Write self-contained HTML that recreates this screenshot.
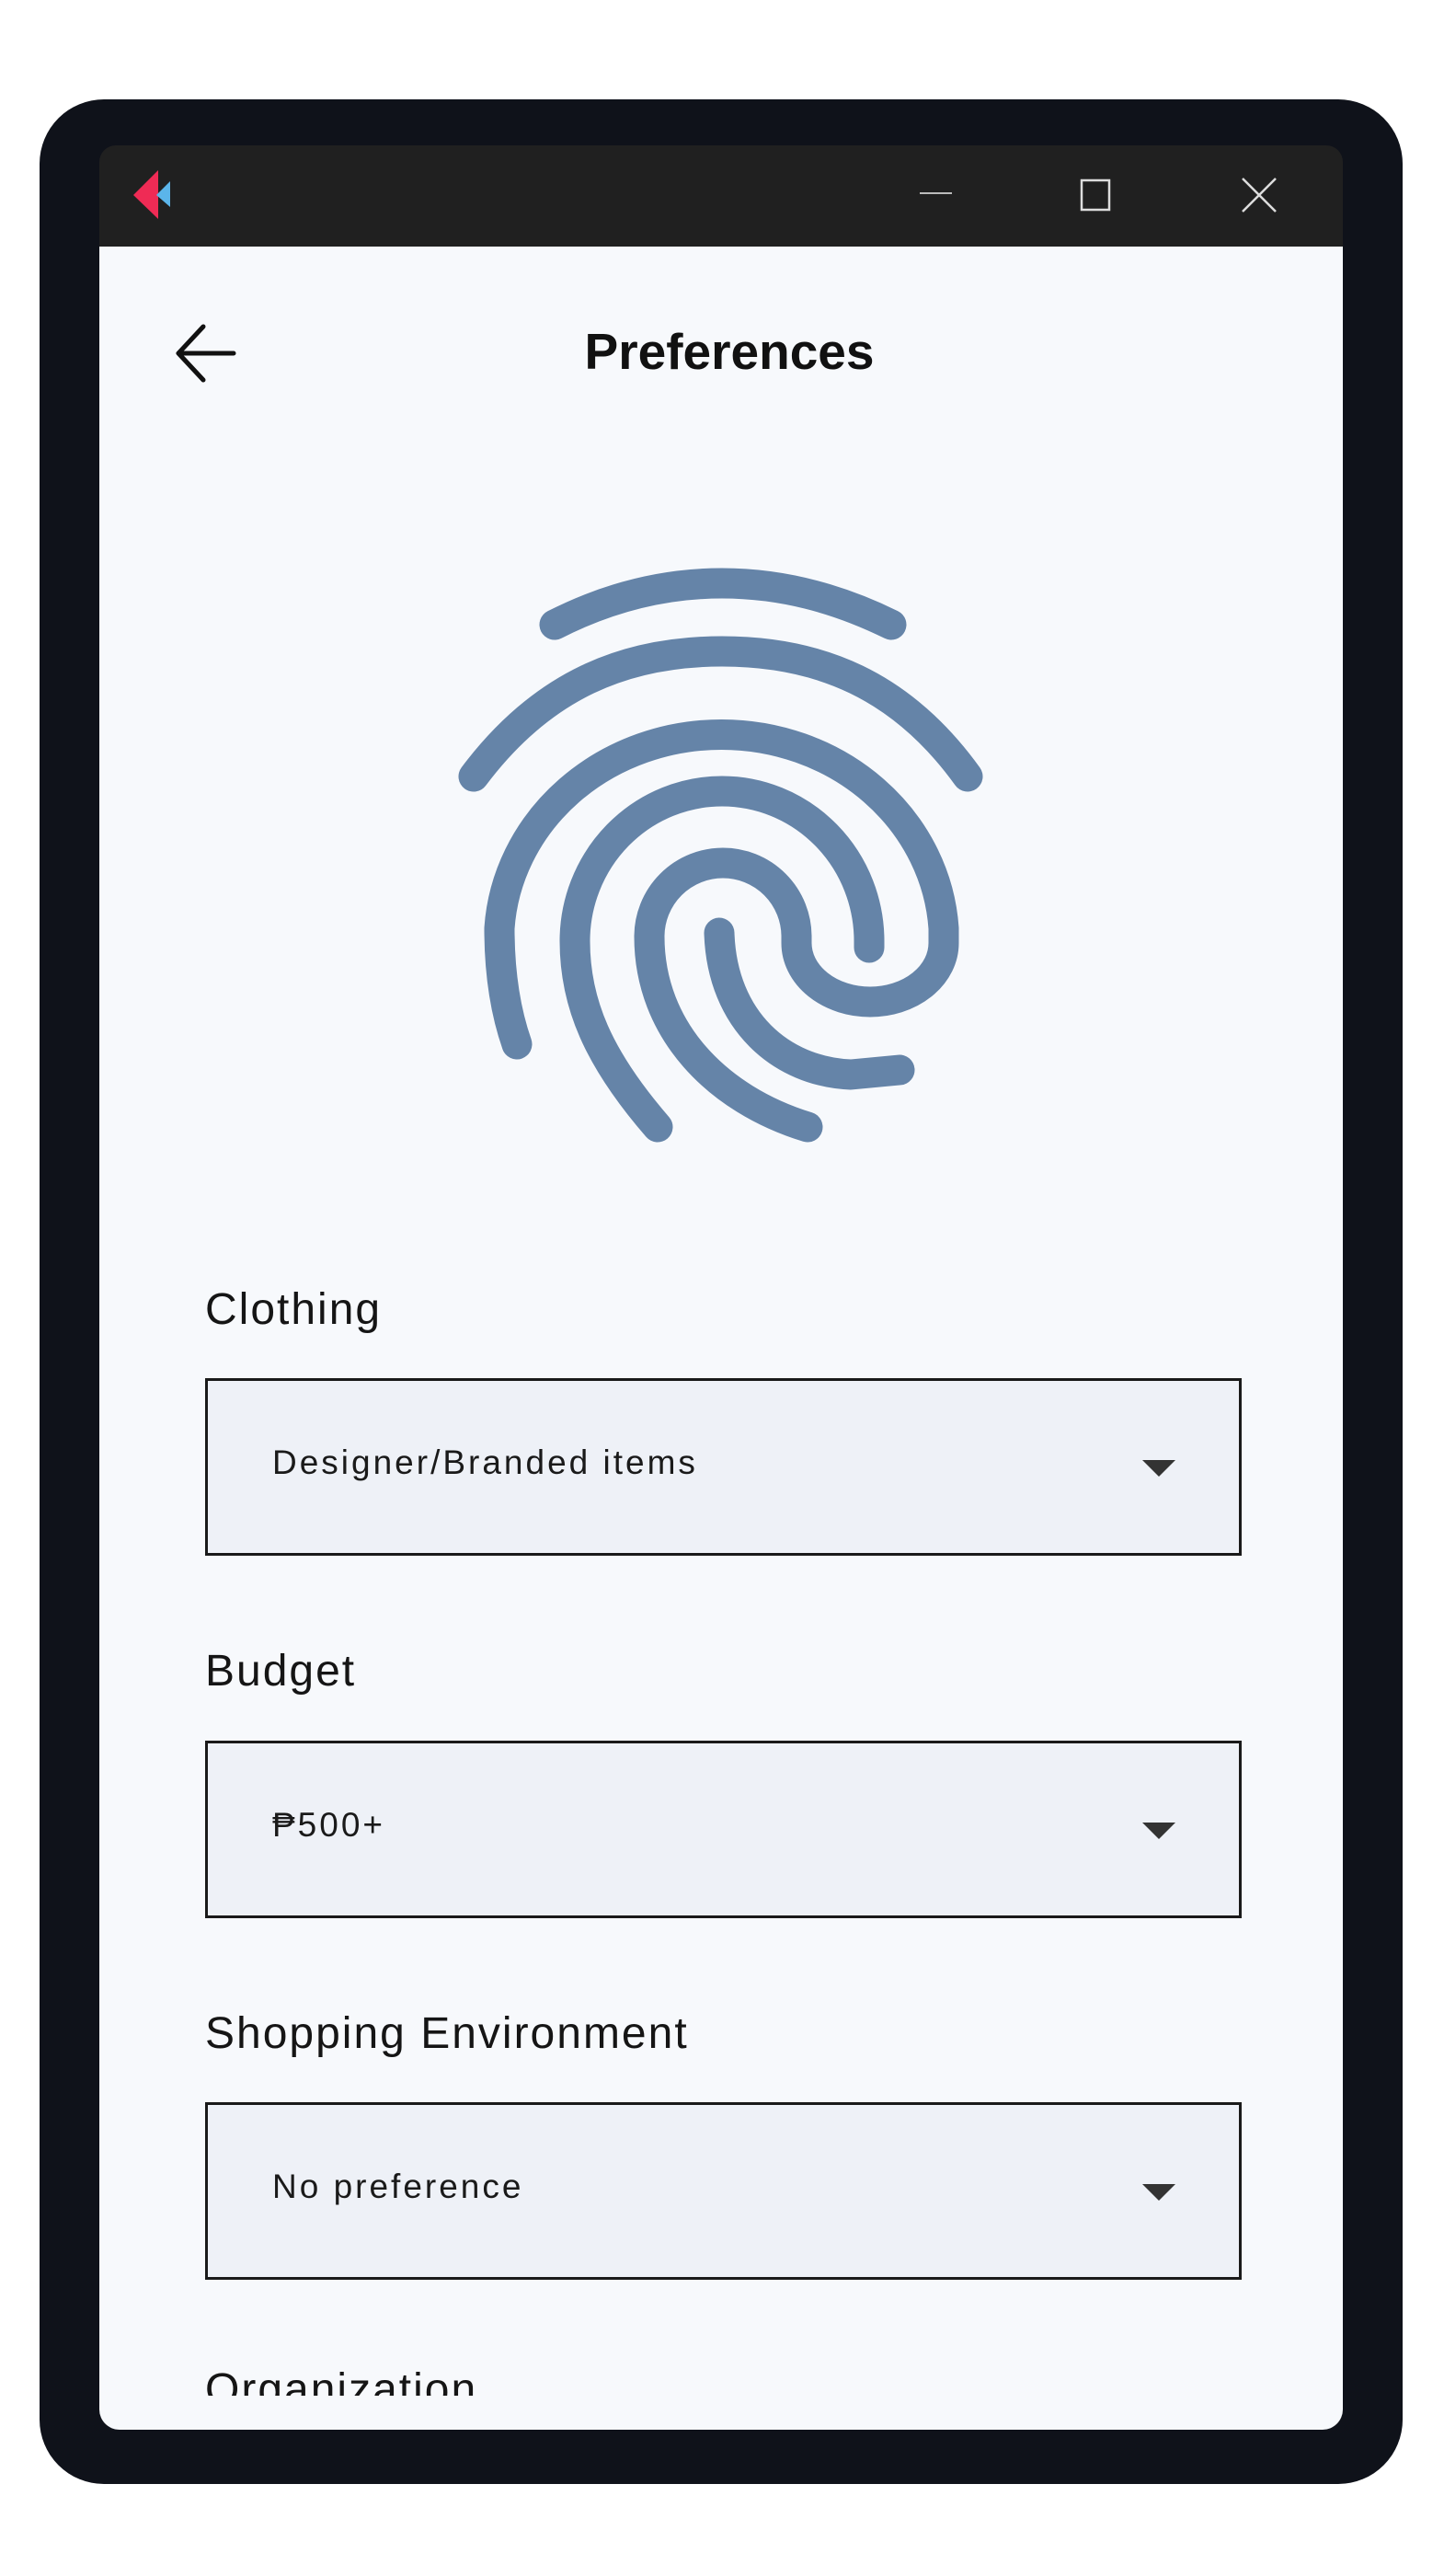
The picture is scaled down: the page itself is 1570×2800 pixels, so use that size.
<!DOCTYPE html>
<html><head><meta charset="utf-8"><style>
*{margin:0;padding:0;box-sizing:border-box}
body{width:1570px;height:2800px;background:#fff;position:relative;overflow:hidden;font-family:"Liberation Sans","DejaVu Sans",sans-serif}
.frame{position:absolute;left:43px;top:108px;width:1482px;height:2592px;background:#0f121a;border-radius:70px}
.tb{position:absolute;left:108px;top:158px;width:1352px;height:110px;background:#202020;border-radius:18px 18px 0 0}
.screen{position:absolute;left:108px;top:268px;width:1352px;height:2373px;background:#f7f9fc;border-radius:0 0 22px 22px;overflow:hidden}
.t{position:absolute;left:8px;width:1570px;text-align:center;top:350px;font-weight:bold;font-size:55px;color:#111}
.lbl{position:absolute;left:223px;font-size:48px;color:#151515;letter-spacing:2px}
.dd{position:absolute;left:223px;width:1127px;height:193px;background:#eef1f7;border:3px solid #1a1a1a}
.dd span{position:absolute;left:70px;top:68px;font-size:37px;color:#1a1a1a;letter-spacing:3px}
.dd i{position:absolute;left:1016px;top:86px;width:0;height:0;border-left:18px solid transparent;border-right:18px solid transparent;border-top:18px solid #333}
</style></head><body>
<div class="frame"></div>
<div class="tb"></div>
<svg style="position:absolute;left:0;top:0" width="1570" height="300">
<path d="M172,185 L145,212 L172,238 Z" fill="#ef2b55"/>
<path d="M185,197 L170,212 L185,225 Z" fill="#5bb5ea"/>
<line x1="1000" y1="210" x2="1035" y2="210" stroke="#bbb" stroke-width="2"/>
<rect x="1176" y="196" width="30" height="32" fill="none" stroke="#ddd" stroke-width="2.5"/>
<path d="M1351,194 L1387,230 M1387,194 L1351,230" stroke="#ddd" stroke-width="2.5"/>
</svg>
<div class="screen"></div>
<svg style="position:absolute;left:0;top:0" width="1570" height="1300">
<path d="M196,384 L254,384 M221,355 L194,384 L221,413" fill="none" stroke="#111" stroke-width="5" stroke-linecap="round" stroke-linejoin="round"/>
<g fill="none" stroke="#6584a8" stroke-width="33" stroke-linecap="round" stroke-linejoin="round">
<path d="M603,679 C660,650 720,634 785,634 C850,634 910,650 969,679"/>
<path d="M515,844 C590,744 680,708 785,708 C890,708 980,744 1052,844"/>
<path d="M562,1135 C548,1095 543,1050 543,1009 A242,225 0 0 1 1026,1009 L1026,1025 A80,64 0 0 1 866,1025 L866,1018 A80,80 0 0 0 706,1018 C706,1120 780,1195 878,1225"/>
<path d="M715,1225 C650,1150 625,1090 625,1023 A160,163 0 0 1 945,1023 L945,1030"/>
<path d="M782,1014 C785,1110 850,1165 925,1168 L978,1163"/>
</g>
</svg>
<div class="t">Preferences</div>
<div class="lbl" style="top:1396px">Clothing</div>
<div class="dd" style="top:1498px"><span>Designer/Branded items</span><i></i></div>
<div class="lbl" style="top:1789px">Budget</div>
<div class="dd" style="top:1892px"><span>₱500+</span><i></i></div>
<div class="lbl" style="top:2183px">Shopping Environment</div>
<div class="dd" style="top:2285px"><span>No preference</span><i></i></div>
<div style="position:absolute;left:223px;top:2570px;height:34px;overflow:hidden"><div class="lbl" style="position:static">Organization</div></div>
</body></html>
